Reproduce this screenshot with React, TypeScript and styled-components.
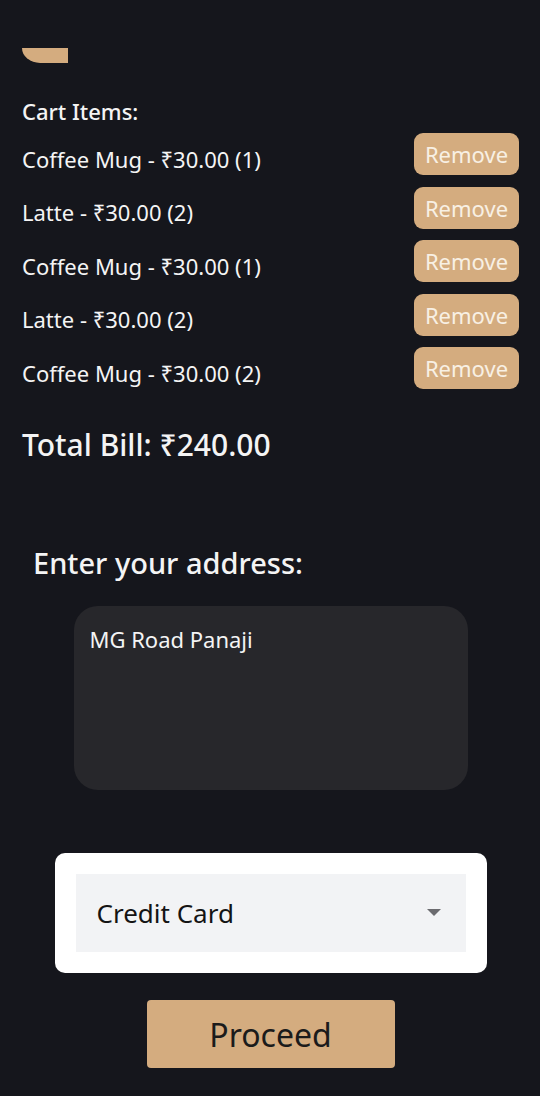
import React, { useState } from "react";
import styled, { createGlobalStyle } from "styled-components";

const GlobalStyle = createGlobalStyle`
  html, body {
    margin: 0;
    padding: 0;
    background: #15161c;
  }
  body {
    font-family: "Noto Sans", "Open Sans", sans-serif;
    color: #f4f4f4;
  }
`;

const ITEMS = [
  { name: "Coffee Mug", price: 30, qty: 1 },
  { name: "Latte", price: 30, qty: 2 },
  { name: "Coffee Mug", price: 30, qty: 1 },
  { name: "Latte", price: 30, qty: 2 },
  { name: "Coffee Mug", price: 30, qty: 2 },
];

export default function App() {
  const [items, setItems] = useState(ITEMS);
  const [address, setAddress] = useState("MG Road Panaji");

  const total = items.reduce((sum, it) => sum + it.price * it.qty, 0);

  return (
    <>
      <GlobalStyle />
      <Page>
        <TopTab />
        <CartTitle>Cart Items:</CartTitle>
        <ItemList>
          {items.map((it, i) => (
            <ItemRow key={i}>
              <ItemText>
                {it.name} - ₹{it.price.toFixed(2)} ({it.qty})
              </ItemText>
              <RemoveButton
                onClick={() => setItems(items.filter((_, j) => j !== i))}
              >
                Remove
              </RemoveButton>
            </ItemRow>
          ))}
        </ItemList>
        <TotalBill>Total Bill: ₹{total.toFixed(2)}</TotalBill>
        <AddressLabel>Enter your address:</AddressLabel>
        <AddressBox
          value={address}
          onChange={(e) => setAddress(e.target.value)}
        />
        <SelectCard>
          <SelectField>
            <span>Credit Card</span>
            <svg width="14" height="8" viewBox="0 0 14 8">
              <path d="M0 0 L14 0 L7 7 Z" fill="#6b6b6f" />
            </svg>
          </SelectField>
        </SelectCard>
        <ProceedButton>Proceed</ProceedButton>
      </Page>
    </>
  );
}

const Page = styled.div`
  display: flex;
  flex-direction: column;
  padding: 0 21px 28px 22px;
  min-height: 1096px;
  box-sizing: border-box;
`;

const TopTab = styled.div`
  width: 46px;
  height: 15px;
  margin-top: 48px;
  background: #d4ac7f;
  border-bottom-left-radius: 18px 15px;
`;

const CartTitle = styled.div`
  margin-top: 34px;
  font-size: 22px;
  line-height: 28px;
  font-weight: 500;
`;

const ItemList = styled.div`
  display: flex;
  flex-direction: column;
  gap: 11.5px;
  margin-top: 8px;
`;

const ItemRow = styled.div`
  display: flex;
  justify-content: space-between;
  align-items: center;
  height: 42px;
`;

const ItemText = styled.span`
  font-size: 22px;
  margin-top: 9px;
`;

const RemoveButton = styled.button`
  width: 105px;
  height: 42px;
  border: none;
  border-radius: 9px;
  background: #d4ac7f;
  color: #f8f0e4;
  font-family: inherit;
  font-size: 22px;
  padding: 0;
  cursor: pointer;
`;

const TotalBill = styled.div`
  margin-top: 37px;
  font-size: 30px;
  line-height: 38px;
  font-weight: 500;
`;

const AddressLabel = styled.div`
  margin-top: 80px;
  padding-left: 11px;
  font-size: 29px;
  line-height: 38px;
  font-weight: 500;
`;

const AddressBox = styled.textarea`
  align-self: center;
  width: 394px;
  height: 184px;
  margin-top: 24px;
  box-sizing: border-box;
  padding: 19px 16px;
  border: none;
  border-radius: 24px;
  background: #27272b;
  color: #f4f4f4;
  font-family: inherit;
  font-size: 22px;
  line-height: 28px;
  resize: none;
  outline: none;
`;

const SelectCard = styled.div`
  align-self: center;
  width: 432px;
  margin-top: 63px;
  padding: 21px;
  box-sizing: border-box;
  background: #ffffff;
  border-radius: 10px;
`;

const SelectField = styled.div`
  display: flex;
  align-items: center;
  justify-content: space-between;
  height: 78px;
  padding: 0 25px 0 21px;
  background: #f2f3f5;
  color: #141414;
  font-size: 26px;
`;

const ProceedButton = styled.button`
  align-self: center;
  width: 248px;
  height: 68px;
  margin-top: 27px;
  border: none;
  border-radius: 4px;
  background: #d4ac7f;
  color: #1b1b1b;
  font-family: inherit;
  font-size: 32px;
  cursor: pointer;
`;
